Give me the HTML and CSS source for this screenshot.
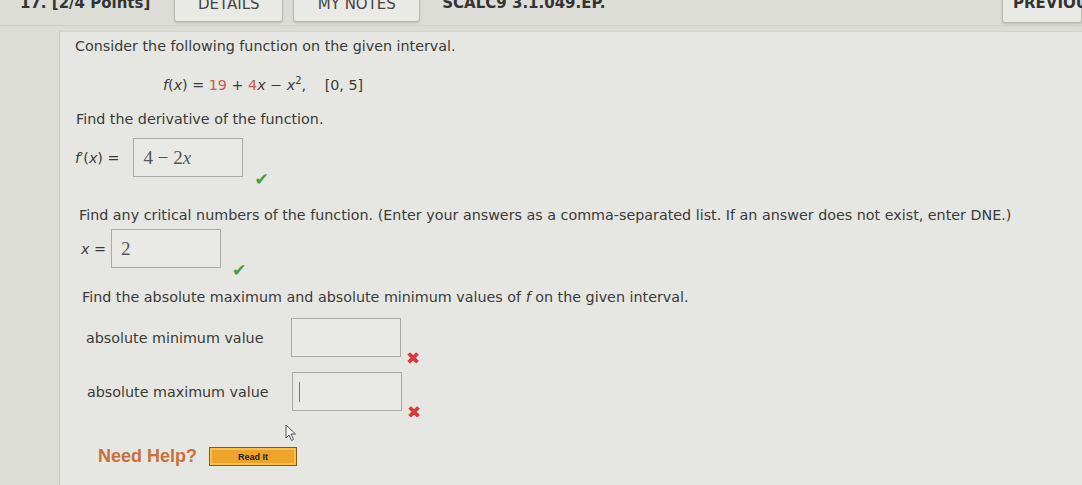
FILE: index.html
```html
<!DOCTYPE html>
<html lang="en">
  <head>
    <meta charset="UTF-8" />
    <meta name="viewport" content="width=device-width, initial-scale=1.0" />
    <title>SCALC9 3.1.049.EP.</title>
    <link rel="stylesheet" href="styles.css">
  </head>
  <body>
    <!-- question header -->
    <div class="topbar">
      <span class="points">17. [2/4 Points]</span>
      <div class="top-button details"><span>DETAILS</span></div>
      <div class="top-button notes"><span>MY NOTES</span></div>
      <span class="qcode">SCALC9 3.1.049.EP.</span>
      <div class="top-button previous"><span>PREVIOUS</span></div>
    </div>

    <div class="question">
      <p class="line first">Consider the following function on the given interval.</p>

      <p class="formula">
        <i>f</i>(<i>x</i>) = <span class="num">19</span> + <span class="num">4</span><i>x</i> &minus; <i>x</i><sup>2</sup>,
        <span class="interval">[0, 5]</span>
      </p>

      <p class="line">Find the derivative of the function.</p>

      <div class="answer-row deriv">
        <span class="label"><i>f</i>&prime;(<i>x</i>) =</span>
        <div class="answer-box"><span class="math">4 &minus; 2<i>x</i></span></div>
        <span class="mark correct">&#10004;</span>
      </div>

      <p class="line crit">Find any critical numbers of the function. (Enter your answers as a comma-separated list. If an answer does not exist, enter DNE.)</p>

      <div class="answer-row critical">
        <span class="label"><i>x</i> =</span>
        <div class="answer-box"><span class="math">2</span></div>
        <span class="mark correct">&#10004;</span>
      </div>

      <p class="line abs">Find the absolute maximum and absolute minimum values of <i>f</i> on the given interval.</p>

      <div class="value-row min">
        <span class="value-label">absolute minimum value</span>
        <div class="answer-box empty"></div>
        <span class="mark wrong">&#10006;</span>
      </div>

      <div class="value-row max">
        <span class="value-label">absolute maximum value</span>
        <div class="answer-box empty"><span class="caret"></span></div>
        <span class="mark wrong">&#10006;</span>
      </div>

      <div class="help">
        <span class="help-text">Need Help?</span>
        <div class="read-it">Read It</div>
      </div>

      <!-- mouse pointer -->
      <svg class="pointer" width="12" height="18" viewBox="0 0 12 18">
        <path d="M1 1 L1 14 L4 11 L6.5 16.5 L8.5 15.5 L6 10 L10.5 10 Z" fill="#f4f4f0" stroke="#555" stroke-width="1"/>
      </svg>
    </div>
  </body>
</html>
```

FILE: styles.css
```css
body {
  margin: 0;
  height: 485px;
  overflow: hidden;
  background: #dcddd7;
  font-family: "DejaVu Sans", Verdana, sans-serif;
  color: #3a3a38;
}

.topbar {
  height: 25px;
  display: flex;
  align-items: flex-end;
  padding-left: 20px;
  border-bottom: 1px solid #cfd0ca;
  margin-bottom: 5px;
  font-size: 15px;
}

.topbar .points,
.topbar .qcode {
  line-height: 1;
  margin-bottom: 14px;
  color: #333;
  font-weight: bold;
}

.top-button {
  height: 34px;
  margin-bottom: 3px;
  background: #e9e9e5;
  border: 1px solid #b9bab4;
  border-radius: 3px;
  box-shadow: 0 1px 2px rgba(0, 0, 0, 0.15);
  color: #444;
  display: flex;
  justify-content: center;
  align-items: flex-end;
  padding-bottom: 9px;
  box-sizing: border-box;
  line-height: 1;
}

.details {
  width: 109px;
  margin-left: 24px;
}

.notes {
  width: 127px;
  margin-left: 10px;
}

.qcode {
  margin-left: 22px;
}

.previous {
  margin-left: auto;
  width: 80px;
  justify-content: flex-start;
  padding-left: 10px;
  padding-bottom: 11px;
  font-weight: bold;
  color: #333;
  margin-bottom: 2px;
}

.question {
  position: relative;
  margin-left: 59px;
  height: 460px;
  background: #e6e7e2;
  border-left: 1px solid #c5c6c0;
  border-top: 1px solid #d2d3cd;
  padding: 0 0 0 15px;
  font-size: 14.3px;
}

p {
  margin: 0;
}

.line {
  line-height: 17px;
}

.first {
  padding-top: 6px;
}

.formula {
  margin: 22px 0 0 88px;
  line-height: 17px;
  font-size: 14.3px;
}

.formula .num {
  color: #c85a52;
}

.formula sup {
  font-size: 10px;
  line-height: 0;
}

.formula .interval {
  margin-left: 14px;
}

.formula + .line {
  margin-top: 17px;
  padding-left: 1px;
}

.answer-row {
  display: flex;
  align-items: center;
  position: relative;
}

.deriv {
  margin-top: 10px;
}

.label {
  margin-right: 4px;
}

.deriv .label {
  margin-right: 14px;
}

.answer-box {
  width: 108px;
  height: 37px;
  border: 1px solid #a9aaa4;
  background: #e9eae5;
  display: flex;
  align-items: center;
}

.math {
  font-family: "Liberation Serif", "DejaVu Serif", serif;
  font-size: 19px;
  color: #555;
  padding-left: 9px;
}

.mark {
  align-self: flex-end;
  font-size: 17px;
  line-height: 1;
  margin-left: 11px;
  margin-bottom: -11px;
}

.correct {
  color: #4a9a3a;
}

.wrong {
  color: #d83a3a;
  font-size: 17px;
}

.crit {
  margin-top: 30px;
  padding-left: 4px;
}

.critical {
  margin-top: 5px;
  padding-left: 6px;
}

.critical .label {
  margin-right: 5px;
}

.abs {
  margin-top: 21px;
  padding-left: 7px;
}

.value-row {
  display: flex;
  align-items: center;
  padding-left: 11px;
}

.value-label {
  width: 205px;
}

.min {
  margin-top: 12px;
}

.max {
  margin-top: 15px;
  padding-left: 12px;
}

.value-row .mark {
  margin-left: 5px;
  margin-bottom: -10px;
}

.caret {
  display: block;
  width: 1px;
  height: 20px;
  background: #777;
  margin-left: 6px;
}

.help {
  display: flex;
  align-items: center;
  margin-top: 35px;
  padding-left: 23px;
}

.help-text {
  font-family: "Liberation Sans", Arial, sans-serif;
  font-weight: bold;
  font-size: 18px;
  color: #c8703a;
}

.read-it {
  margin-left: 12px;
  width: 88px;
  height: 19px;
  background: #eea42a;
  border: 1px solid #8a5a10;
  box-shadow: inset 0 0 0 2px #f6c050;
  box-sizing: border-box;
  display: flex;
  align-items: center;
  justify-content: center;
  font-family: "Liberation Sans", Arial, sans-serif;
  font-size: 9px;
  font-weight: bold;
  color: #222;
}

.pointer {
  position: absolute;
  left: 225px;
  top: 392px;
}
```
